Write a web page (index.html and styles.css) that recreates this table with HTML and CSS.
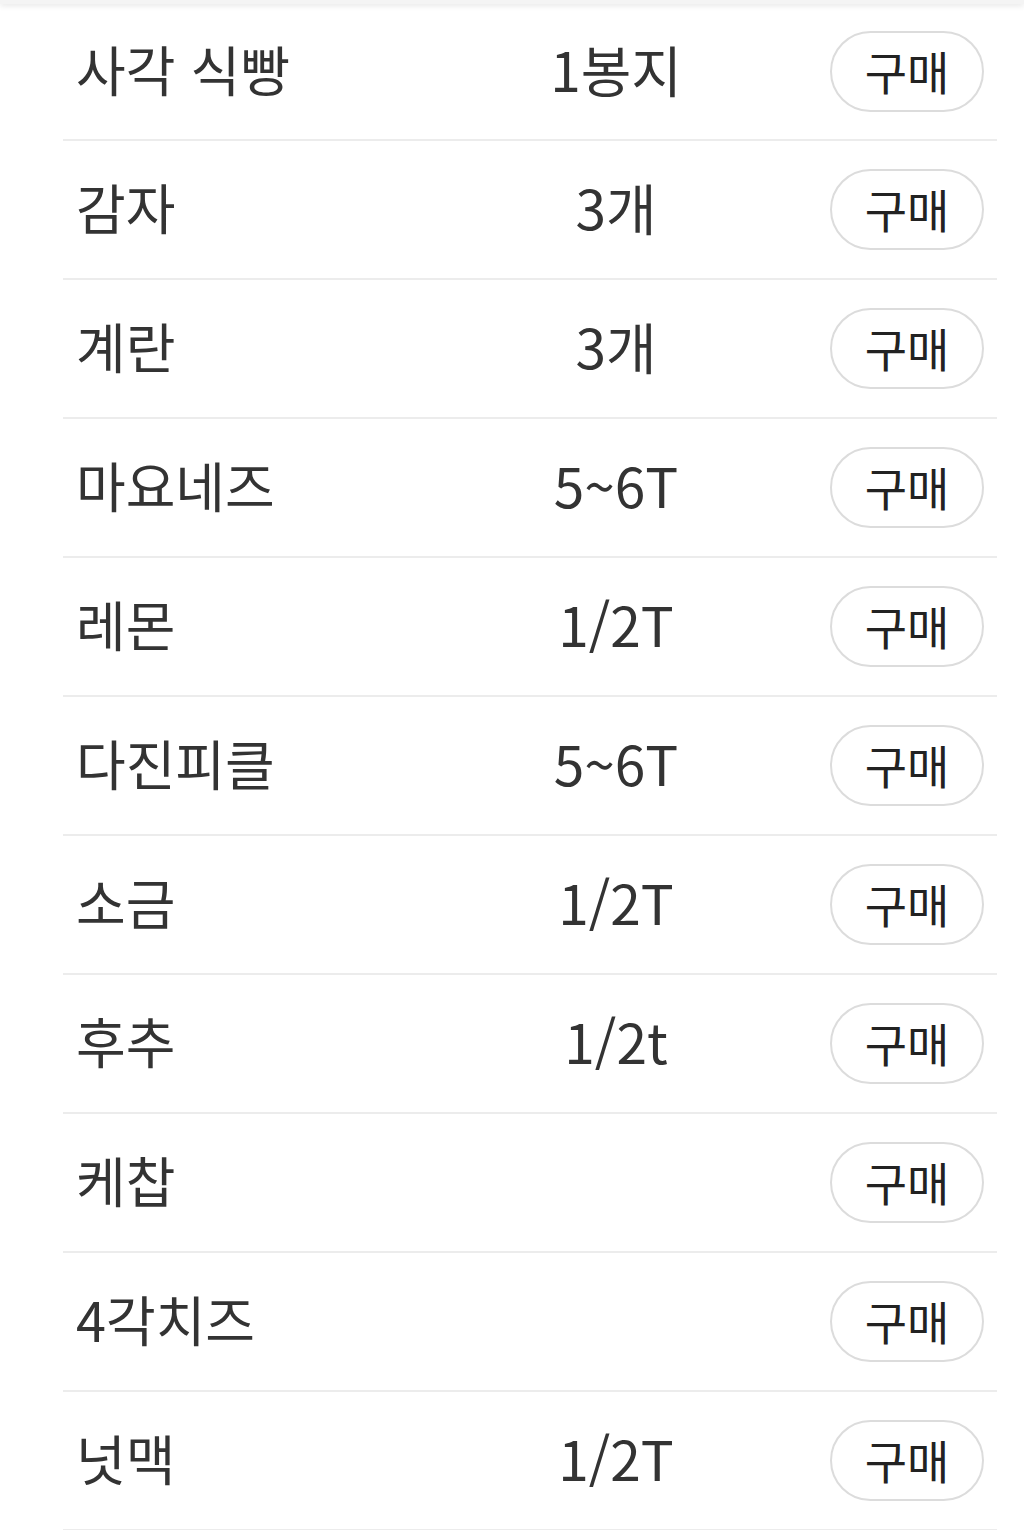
FILE: index.html
```html
<!DOCTYPE html>
<html lang="ko">
<head>
<meta charset="utf-8">
<link rel="stylesheet" href="styles.css">
</head>
<body>
<div class="topbar"></div>
<ul class="list">
  <li class="row"><span class="name">사각 식빵</span><span class="qty">1봉지</span><span class="buy-cell"><button class="buy">구매</button></span></li>
  <li class="row"><span class="name">감자</span><span class="qty">3개</span><span class="buy-cell"><button class="buy">구매</button></span></li>
  <li class="row"><span class="name">계란</span><span class="qty">3개</span><span class="buy-cell"><button class="buy">구매</button></span></li>
  <li class="row"><span class="name">마요네즈</span><span class="qty">5~6T</span><span class="buy-cell"><button class="buy">구매</button></span></li>
  <li class="row"><span class="name">레몬</span><span class="qty">1/2T</span><span class="buy-cell"><button class="buy">구매</button></span></li>
  <li class="row"><span class="name">다진피클</span><span class="qty">5~6T</span><span class="buy-cell"><button class="buy">구매</button></span></li>
  <li class="row"><span class="name">소금</span><span class="qty">1/2T</span><span class="buy-cell"><button class="buy">구매</button></span></li>
  <li class="row"><span class="name">후추</span><span class="qty">1/2t</span><span class="buy-cell"><button class="buy">구매</button></span></li>
  <li class="row"><span class="name">케찹</span><span class="qty"></span><span class="buy-cell"><button class="buy">구매</button></span></li>
  <li class="row"><span class="name">4각치즈</span><span class="qty"></span><span class="buy-cell"><button class="buy">구매</button></span></li>
  <li class="row"><span class="name">넛맥</span><span class="qty">1/2T</span><span class="buy-cell"><button class="buy">구매</button></span></li>
</ul>
</body>
</html>
```

FILE: styles.css
```css
html, body {
  margin: 0;
  padding: 0;
  background: #ffffff;
}
body {
  font-family: "Noto Sans CJK KR", "Noto Sans", sans-serif;
  color: #333333;
  overflow: hidden;
}
.topbar {
  height: 4px;
  background: #f4f4f4;
  box-shadow: 0 1px 6px rgba(0, 0, 0, 0.14);
  position: relative;
  z-index: 1;
}
.list {
  list-style: none;
  margin: 0;
  padding: 0 27px 0 63px;
}
.row {
  display: grid;
  grid-template-columns: 403px 300px 1fr;
  align-items: center;
  height: 137px;
  border-bottom: 2px solid #ececec;
}
.row:first-child {
  height: 135px;
}
.name {
  padding-left: 13px;
  padding-bottom: 6px;
  font-size: 54px;
  line-height: 1;
}
.qty {
  text-align: center;
  font-size: 55px;
  line-height: 1;
  padding-bottom: 6px;
}
.buy-cell {
  display: flex;
  justify-content: flex-end;
  padding-right: 13px;
}
.buy {
  width: 154px;
  height: 81px;
  border: 2px solid #dcdcdc;
  border-radius: 41px;
  background: #ffffff;
  font-family: "Noto Sans CJK KR", "Noto Sans", sans-serif;
  font-size: 46px;
  line-height: 1;
  color: #222222;
  padding: 0 0 4px 0;
  display: flex;
  align-items: center;
  justify-content: center;
}
```
